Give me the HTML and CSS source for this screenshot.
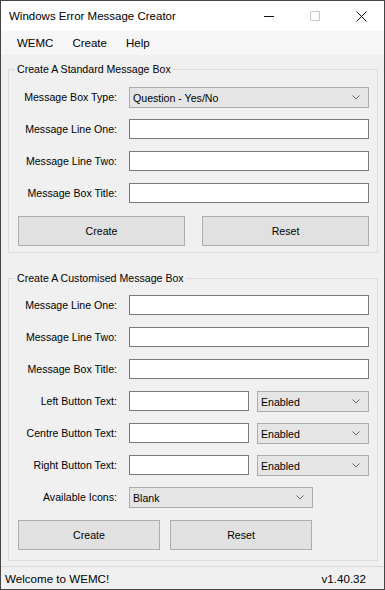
FILE: index.html
```html
<!DOCTYPE html>
<html>
<head>
  <title>Windows Error Message Creator</title>
  <link rel="stylesheet" href="styles.css">
</head>
<body>
  <div class="window">
    <!-- Title bar -->
    <div class="titlebar">
      <span class="title">Windows Error Message Creator</span>
      <div class="caption">
        <span class="cap"><svg width="10" height="10"><line x1="0" y1="5.5" x2="10" y2="5.5" stroke="#111" stroke-width="1"/></svg></span>
        <span class="cap"><svg width="10" height="10"><rect x="0.5" y="0.5" width="9" height="9" fill="none" stroke="#cccccc" stroke-width="1"/></svg></span>
        <span class="cap"><svg width="11" height="11"><path d="M0.5 0.5 L10.5 10.5 M10.5 0.5 L0.5 10.5" stroke="#111" stroke-width="1"/></svg></span>
      </div>
    </div>

    <!-- Menu -->
    <div class="menubar">
      <span class="menu-item">WEMC</span>
      <span class="menu-item">Create</span>
      <span class="menu-item">Help</span>
    </div>

    <div class="content">
      <!-- Standard message box -->
      <fieldset class="group group-standard">
        <legend>Create A Standard Message Box</legend>
        <div class="rows">
          <div class="row">
            <label>Message Box Type:</label>
            <div class="combo combo-full">
              <span>Question - Yes/No</span>
              <svg width="8" height="5"><path d="M0.5 0.5 L4 4 L7.5 0.5" fill="none" stroke="#666" stroke-width="1"/></svg>
            </div>
          </div>
          <div class="row">
            <label>Message Line One:</label>
            <input type="text" class="field field-full">
          </div>
          <div class="row">
            <label>Message Line Two:</label>
            <input type="text" class="field field-full">
          </div>
          <div class="row">
            <label>Message Box Title:</label>
            <input type="text" class="field field-full">
          </div>
        </div>
        <div class="buttons">
          <button class="btn btn-wide">Create</button>
          <button class="btn btn-wide">Reset</button>
        </div>
      </fieldset>

      <!-- Customised message box -->
      <fieldset class="group group-custom">
        <legend>Create A Customised Message Box</legend>
        <div class="rows">
          <div class="row">
            <label>Message Line One:</label>
            <input type="text" class="field field-full">
          </div>
          <div class="row">
            <label>Message Line Two:</label>
            <input type="text" class="field field-full">
          </div>
          <div class="row">
            <label>Message Box Title:</label>
            <input type="text" class="field field-full">
          </div>
          <div class="row">
            <label>Left Button Text:</label>
            <input type="text" class="field field-short">
            <div class="combo combo-small">
              <span>Enabled</span>
              <svg width="8" height="5"><path d="M0.5 0.5 L4 4 L7.5 0.5" fill="none" stroke="#666" stroke-width="1"/></svg>
            </div>
          </div>
          <div class="row">
            <label>Centre Button Text:</label>
            <input type="text" class="field field-short">
            <div class="combo combo-small">
              <span>Enabled</span>
              <svg width="8" height="5"><path d="M0.5 0.5 L4 4 L7.5 0.5" fill="none" stroke="#666" stroke-width="1"/></svg>
            </div>
          </div>
          <div class="row">
            <label>Right Button Text:</label>
            <input type="text" class="field field-short">
            <div class="combo combo-small">
              <span>Enabled</span>
              <svg width="8" height="5"><path d="M0.5 0.5 L4 4 L7.5 0.5" fill="none" stroke="#666" stroke-width="1"/></svg>
            </div>
          </div>
          <div class="row">
            <label>Available Icons:</label>
            <div class="combo combo-icons">
              <span>Blank</span>
              <svg width="8" height="5"><path d="M0.5 0.5 L4 4 L7.5 0.5" fill="none" stroke="#666" stroke-width="1"/></svg>
            </div>
          </div>
        </div>
        <div class="buttons buttons-narrow">
          <button class="btn btn-narrow">Create</button>
          <button class="btn btn-narrow">Reset</button>
        </div>
      </fieldset>
    </div>

    <!-- Status bar -->
    <div class="statusbar">
      <span>Welcome to WEMC!</span>
      <span>v1.40.32</span>
    </div>
  </div>
</body>
</html>
```

FILE: styles.css
```css
body {
  margin: 0;
  font-family: "Liberation Sans", Arial, sans-serif;
  color: #000;
  background: #fff;
}
.window {
  width: 385px;
  height: 590px;
  box-sizing: border-box;
  border: 1px solid #454545;
  background: #f0f0f0;
  display: flex;
  flex-direction: column;
}
/* Title bar */
.titlebar {
  height: 30px;
  background: #fff;
  display: flex;
  align-items: center;
  justify-content: space-between;
}
.title {
  font-size: 11.5px;
  padding-left: 8px;
}
.caption {
  display: flex;
  height: 30px;
}
.cap {
  width: 46px;
  display: flex;
  align-items: center;
  justify-content: center;
}
.cap svg {
  display: block;
}
/* Menu */
.menubar {
  height: 24px;
  background: #f6f6f6;
  display: flex;
  align-items: center;
  padding-left: 6px;
  font-size: 11.5px;
}
.menu-item {
  padding: 0 9px 0 10px;
}
/* Group boxes */
.content {
  flex: 1;
  padding: 6px 6px 0 7px;
}
.group {
  margin: 0;
  padding: 0;
  border: 1px solid #dcdcdc;
  min-width: 0;
  font-size: 10.6px;
}
.group legend {
  font-size: 10.6px;
  line-height: 17px;
  padding: 0 2px;
  margin-left: 6px;
}
.group-custom {
  margin-top: 17px;
}
.rows {
  display: flex;
  flex-direction: column;
  gap: 11px;
  padding-top: 9px;
}
.group-custom .rows {
  padding-top: 8px;
}
.row {
  height: 21px;
  display: flex;
  align-items: flex-start;
}
.row label {
  width: 108px;
  padding-right: 12px;
  text-align: right;
  line-height: 20px;
}
.field {
  height: 20px;
  box-sizing: border-box;
  border: 1px solid #7a7a7a;
  background: #fff;
  margin: 0;
  padding: 0 3px;
  font: inherit;
  outline: none;
}
.field-full {
  width: 240px;
}
.field-short {
  width: 120px;
  margin-right: 8px;
}
.combo {
  height: 21px;
  box-sizing: border-box;
  border: 1px solid #acacac;
  background: #e5e5e5;
  display: flex;
  align-items: center;
  justify-content: space-between;
  padding: 0 8px 0 3px;
}
.combo svg {
  display: block;
}
.combo-full {
  width: 240px;
}
.combo-small {
  width: 112px;
}
.combo-icons {
  width: 184px;
}
/* Buttons */
.buttons {
  display: flex;
  gap: 17px;
  padding: 12px 0 6px 9px;
}
.buttons-narrow {
  gap: 10px;
  padding-bottom: 10px;
}
.btn {
  height: 30px;
  box-sizing: border-box;
  border: 1px solid #adadad;
  background: #e1e1e1;
  font: inherit;
  color: #000;
  padding: 0;
}
.btn-wide {
  width: 167px;
}
.btn-narrow {
  width: 142px;
}
/* Status bar */
.statusbar {
  height: 22px;
  border-top: 1px solid #dadada;
  display: flex;
  align-items: center;
  justify-content: space-between;
  padding: 0 18px 0 4px;
  font-size: 11.6px;
}
```
